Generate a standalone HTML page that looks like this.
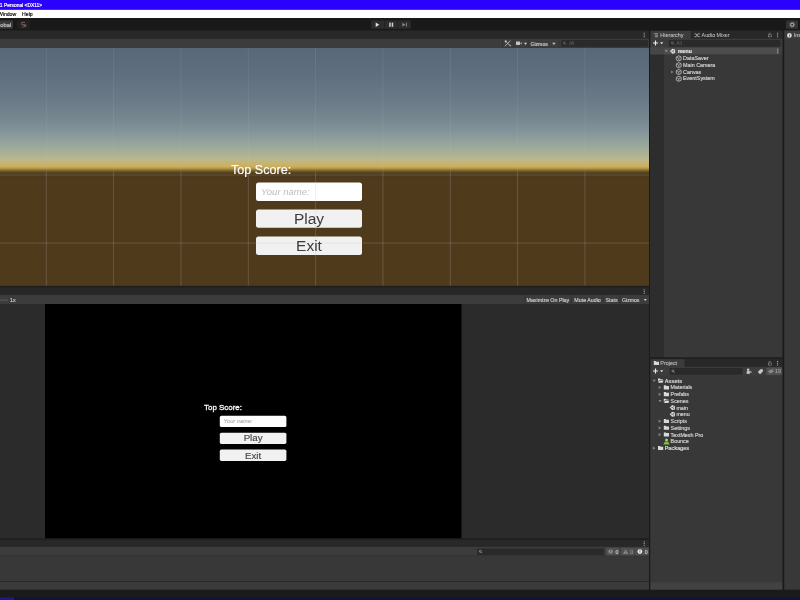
<!DOCTYPE html>
<html>
<head>
<meta charset="utf-8">
<title>Unity</title>
<style>
*{margin:0;padding:0;box-sizing:border-box;}
html,body{width:800px;height:600px;overflow:hidden;background:#383838;}
body{position:relative;font-family:"Liberation Sans",sans-serif;font-size:5.3px;color:#d2d2d2;line-height:1;}
#root{position:absolute;left:0;top:0;width:800px;height:600px;will-change:transform;overflow:hidden;}
#bg{position:absolute;left:0;top:0;}
.t{position:absolute;white-space:nowrap;line-height:1;}
.s{-webkit-text-stroke:0.18px currentColor;}
</style>
</head>
<body>
<div id="root">
<svg id="bg" width="800" height="600" viewBox="0 0 800 600">
<!-- base -->
<rect x="0" y="0" width="800" height="600" fill="#383838"/>
<rect x="0" y="18" width="800" height="13.5" fill="#191919"/>
<!-- scene panel -->
<rect x="0" y="30.4" width="649.0" height="10" fill="#282828"/>
<rect x="0" y="38.8" width="649.0" height="10" fill="#3c3c3c"/>
<rect x="0" y="47.2" width="649.0" height="2" fill="#232323"/>
<defs><linearGradient id="sky" gradientUnits="userSpaceOnUse" x1="0" y1="47.7" x2="0" y2="287.3"><stop offset="0.00000" stop-color="#58687a"/><stop offset="0.10434" stop-color="#5e6e7e"/><stop offset="0.21703" stop-color="#6a7a87"/><stop offset="0.29215" stop-color="#75868f"/><stop offset="0.35476" stop-color="#84969a"/><stop offset="0.40902" stop-color="#99a89b"/><stop offset="0.44240" stop-color="#abb194"/><stop offset="0.46745" stop-color="#bcb78a"/><stop offset="0.48414" stop-color="#c8b46c"/><stop offset="0.49666" stop-color="#cbad5c"/><stop offset="0.50501" stop-color="#b09344"/><stop offset="0.51336" stop-color="#7a612b"/><stop offset="0.52170" stop-color="#574220"/><stop offset="0.53005" stop-color="#4a371b"/><stop offset="0.54674" stop-color="#4f3a1c"/><stop offset="1.00000" stop-color="#4f3a1c"/></linearGradient></defs>
<rect x="0" y="47.7" width="649.0" height="239.6" fill="url(#sky)"/>
<rect x="256" y="182.5" width="106" height="18.5" rx="2.5" fill="#fff"/>
<rect x="256" y="209.5" width="106" height="18.3" rx="2.5" fill="#f1f1f1"/>
<rect x="256" y="236.5" width="106" height="18.5" rx="2.5" fill="#f1f1f1"/>
<rect x="45.85" y="47.7" width="0.9" height="124.3" fill="rgba(200,200,200,0.13)"/>
<rect x="45.85" y="172" width="0.9" height="115.3" fill="rgba(190,190,190,0.25)"/>
<rect x="113.18" y="47.7" width="0.9" height="124.3" fill="rgba(200,200,200,0.13)"/>
<rect x="113.18" y="172" width="0.9" height="115.3" fill="rgba(190,190,190,0.25)"/>
<rect x="180.51" y="47.7" width="0.9" height="124.3" fill="rgba(200,200,200,0.13)"/>
<rect x="180.51" y="172" width="0.9" height="115.3" fill="rgba(190,190,190,0.25)"/>
<rect x="247.84" y="47.7" width="0.9" height="124.3" fill="rgba(200,200,200,0.13)"/>
<rect x="247.84" y="172" width="0.9" height="115.3" fill="rgba(190,190,190,0.25)"/>
<rect x="315.17" y="47.7" width="0.9" height="124.3" fill="rgba(200,200,200,0.13)"/>
<rect x="315.17" y="172" width="0.9" height="115.3" fill="rgba(190,190,190,0.25)"/>
<rect x="382.5" y="47.7" width="0.9" height="124.3" fill="rgba(200,200,200,0.13)"/>
<rect x="382.5" y="172" width="0.9" height="115.3" fill="rgba(190,190,190,0.25)"/>
<rect x="449.83" y="47.7" width="0.9" height="124.3" fill="rgba(200,200,200,0.13)"/>
<rect x="449.83" y="172" width="0.9" height="115.3" fill="rgba(190,190,190,0.25)"/>
<rect x="517.16" y="47.7" width="0.9" height="124.3" fill="rgba(200,200,200,0.13)"/>
<rect x="517.16" y="172" width="0.9" height="115.3" fill="rgba(190,190,190,0.25)"/>
<rect x="584.49" y="47.7" width="0.9" height="124.3" fill="rgba(200,200,200,0.13)"/>
<rect x="584.49" y="172" width="0.9" height="115.3" fill="rgba(190,190,190,0.25)"/>
<rect x="0" y="174.55" width="649.0" height="0.9" fill="rgba(190,190,190,0.25)"/>
<rect x="0" y="242.55" width="649.0" height="0.9" fill="rgba(190,190,190,0.25)"/>
<!-- game panel -->
<rect x="0" y="285.8" width="649.0" height="3" fill="#1e1e1e"/>
<rect x="0" y="287.5" width="649.0" height="9" fill="#282828"/>
<rect x="0" y="295" width="649.0" height="10" fill="#3c3c3c"/>
<rect x="0" y="304" width="649.0" height="236" fill="#2b2b2b"/>
<rect x="45" y="304" width="416.5" height="235" fill="#000"/>
<rect x="0" y="538.2" width="649.0" height="3" fill="#1e1e1e"/>
<!-- console -->
<rect x="0" y="539.8" width="649.0" height="8" fill="#282828"/>
<rect x="0" y="546.8" width="649.0" height="10" fill="#3c3c3c"/>
<rect x="0" y="555.7" width="649.0" height="27" fill="#383838"/>
<rect x="0" y="555.6" width="649.0" height="0.6" fill="#303030"/>
<rect x="0" y="581.1" width="649.0" height="0.9" fill="#2a2a2a"/>
<rect x="0" y="582" width="649.0" height="8" fill="#3a3a3a"/>
<!-- hierarchy -->
<rect x="649.0" y="30.4" width="1.5" height="560" fill="#1a1a1a"/>
<rect x="650.5" y="30.4" width="132.0" height="10" fill="#282828"/>
<rect x="650.5" y="38.8" width="132.0" height="10" fill="#3c3c3c"/>
<rect x="650.5" y="47.4" width="132.0" height="311" fill="#383838"/>
<rect x="650.5" y="54.3" width="13.5" height="304" fill="#2d2d2d"/>
<rect x="650.5" y="47.5" width="132.0" height="6.8" fill="#4d4d4d"/>
<rect x="650.5" y="47.5" width="13.5" height="6.8" fill="#464646"/>
<rect x="778.6" y="47.5" width="3.9" height="6.8" fill="#3f3f3f"/>
<rect x="650.8" y="31" width="40" height="8.2" fill="#3c3c3c"/>
<!-- project -->
<rect x="650.5" y="357.4" width="132.0" height="2" fill="#1a1a1a"/>
<rect x="650.5" y="358.6" width="132.0" height="9" fill="#282828"/>
<rect x="650.8" y="359.2" width="33.6" height="8" fill="#3c3c3c"/>
<rect x="650.5" y="366.8" width="132.0" height="10" fill="#3c3c3c"/>
<rect x="650.5" y="375.6" width="132.0" height="207" fill="#383838"/>
<rect x="650.5" y="582.3" width="132.0" height="8" fill="#424242"/>
<!-- inspector -->
<rect x="782.5" y="30.4" width="2" height="560" fill="#1a1a1a"/>
<rect x="784.5" y="30.4" width="16" height="9" fill="#3c3c3c"/>
<rect x="784.5" y="38.8" width="16" height="552" fill="#383838"/>
<!-- bottom -->
<rect x="0" y="589.7" width="800" height="11" fill="#1a1a1a"/>
<rect x="0" y="597.4" width="800" height="3" fill="#15123a"/>
<rect x="0" y="597.4" width="14" height="3" fill="#24168a"/>
<!-- title/menu -->
<rect x="0" y="9.6" width="800" height="8.4" fill="#ffffff"/>
<rect x="0" y="0" width="800" height="9.6" fill="#2a00ff"/>
<!-- main toolbar -->
<rect x="-3" y="20.6" width="16" height="8.2" rx="1" fill="#3a3a3a"/>
<rect x="17.4" y="20.6" width="12.4" height="8.2" rx="1" fill="#242020"/>
<g transform="translate(17.4,20.6)"><path d="M7.6 1.7 H4.3 V4 H6.4" fill="none" stroke="#7a6460" stroke-width="0.9"/><path d="M4.2 6.4 H7" fill="none" stroke="#6a5552" stroke-width="0.8"/><circle cx="7.5" cy="5" r="1.5" fill="#6e5654"/></g>
<rect x="371.2" y="20.5" width="39.6" height="8.3" rx="1" fill="#2c2c2c"/>
<rect x="384.2" y="20.5" width="0.6" height="8.3" fill="#1d1d1d"/>
<rect x="397.5" y="20.5" width="0.6" height="8.3" fill="#1d1d1d"/>
<g transform="translate(371.2,20.5)"><path d="M4.5 1.9 L8.1 4.15 L4.5 6.4 Z" fill="#e0e0e0"/>
<rect x="18" y="2.1" width="1.5" height="4.2" fill="#cfcfcf"/><rect x="20.5" y="2.1" width="1.5" height="4.2" fill="#cfcfcf"/>
<path d="M31.2 2.2 L34.4 4.15 L31.2 6.1 Z" fill="#8a8a8a"/><rect x="34.8" y="2.2" width="0.9" height="3.9" fill="#8a8a8a"/></g>
<rect x="786" y="20.6" width="12" height="8.2" rx="1" fill="#333333"/>
<g transform="translate(786,20.6)"><circle cx="6.2" cy="4.1" r="1.6" fill="none" stroke="#9c9c9c" stroke-width="1.2"/><circle cx="6.2" cy="4.1" r="2.4" fill="none" stroke="#9c9c9c" stroke-width="0.7" stroke-dasharray="0.95 0.95"/></g>
<!-- scene toolbar -->
<g transform="translate(643.2,32.6)"><rect x="0.5" y="0.2" width="1" height="1" fill="#b8b8b8"/><rect x="0.5" y="1.95" width="1" height="1" fill="#b8b8b8"/><rect x="0.5" y="3.7" width="1" height="1" fill="#b8b8b8"/></g>
<rect x="502.2" y="38.8" width="0.6" height="8.4" fill="#2e2e2e"/>
<rect x="513.2" y="38.8" width="0.6" height="8.4" fill="#2e2e2e"/>
<rect x="527.9" y="38.8" width="0.6" height="8.4" fill="#2e2e2e"/>
<rect x="558.7" y="38.8" width="0.6" height="8.4" fill="#2e2e2e"/>
<g transform="translate(504.5,40.2)"><path d="M0.9 0.9 L6 5.8 M5.9 0.4 L0.5 6" stroke="#c0c0c0" stroke-width="0.85" fill="none"/><circle cx="1.2" cy="1.2" r="1.05" fill="#c0c0c0"/><circle cx="5.6" cy="5.4" r="0.7" fill="#c0c0c0"/></g>
<g transform="translate(516,41.5)"><rect x="0" y="0" width="4" height="3.5" rx="0.4" fill="#c4c4c4"/><path d="M4.2 1.75 L5.6 0.5 V3 Z" fill="#c4c4c4"/></g>
<g transform="translate(523.8,42.8)"><path d="M0 0 H3.4 L1.7 2.1 Z" fill="#c4c4c4"/></g>
<g transform="translate(552.2,42.8)"><path d="M0 0 H3.4 L1.7 2.1 Z" fill="#c4c4c4"/></g>
<rect x="561" y="40" width="87" height="6.7" rx="1.2" fill="#2a2a2a"/>
<g transform="translate(563,41.6)"><circle cx="1.3" cy="1.3" r="1" fill="none" stroke="#7a7a7a" stroke-width="0.6"/><path d="M2 2 L3.2 3.2" stroke="#7a7a7a" stroke-width="0.6"/></g>
<!-- game toolbar -->
<g transform="translate(643.2,289.2)"><rect x="0.5" y="0.2" width="1" height="1" fill="#b8b8b8"/><rect x="0.5" y="1.95" width="1" height="1" fill="#b8b8b8"/><rect x="0.5" y="3.7" width="1" height="1" fill="#b8b8b8"/></g>
<rect x="524.7" y="295.2" width="0.6" height="8.6" fill="#303030"/>
<rect x="571.3" y="295.2" width="0.6" height="8.6" fill="#303030"/>
<rect x="602.7" y="295.2" width="0.6" height="8.6" fill="#303030"/>
<rect x="619.7" y="295.2" width="0.6" height="8.6" fill="#303030"/>
<rect x="0" y="299.7" width="8" height="0.8" fill="#646464"/>
<g transform="translate(643.6,299)"><path d="M0 0 H3.4 L1.7 2.1 Z" fill="#c4c4c4"/></g>
<rect x="219.8" y="415.8" width="66.6" height="11.3" rx="1.6" fill="#fff"/>
<rect x="219.8" y="432.7" width="66.6" height="11.2" rx="1.6" fill="#f1f1f1"/>
<rect x="219.8" y="449.6" width="66.6" height="11.3" rx="1.6" fill="#f1f1f1"/>
<!-- console toolbar -->
<g transform="translate(643.2,541.1)"><rect x="0.5" y="0.2" width="1" height="1" fill="#b8b8b8"/><rect x="0.5" y="1.95" width="1" height="1" fill="#b8b8b8"/><rect x="0.5" y="3.7" width="1" height="1" fill="#b8b8b8"/></g>
<rect x="477" y="548.4" width="127" height="6.7" rx="1.2" fill="#2a2a2a"/>
<g transform="translate(479,550)"><circle cx="1.3" cy="1.3" r="1" fill="none" stroke="#b0b0b0" stroke-width="0.6"/><path d="M2 2 L3.2 3.2" stroke="#b0b0b0" stroke-width="0.6"/></g>
<rect x="606" y="547.7" width="13.6" height="7.9" rx="0.8" fill="#505050"/>
<rect x="620.9" y="547.7" width="13.6" height="7.9" rx="0.8" fill="#505050"/>
<rect x="635.2" y="547.7" width="13.6" height="7.9" rx="0.8" fill="#505050"/>
<g transform="translate(606,547.7)"><circle cx="4.6" cy="3.9" r="2.2" fill="#8c8c8c"/><rect x="4.25" y="2.6" width="0.7" height="1.7" fill="#505050"/><rect x="4.25" y="4.7" width="0.7" height="0.7" fill="#505050"/></g>
<g transform="translate(620.9,547.7)"><path d="M4.7 1.5 L7.2 6.1 H2.2 Z" fill="#8c8c8c"/><rect x="4.4" y="3" width="0.6" height="1.6" fill="#505050"/><rect x="4.4" y="5" width="0.6" height="0.6" fill="#505050"/></g>
<g transform="translate(635.2,547.7)"><circle cx="4.7" cy="3.9" r="2.35" fill="#ececec"/><rect x="4.3" y="2.5" width="0.8" height="1.8" fill="#505050"/><rect x="4.3" y="4.7" width="0.8" height="0.7" fill="#505050"/></g>
<!-- hierarchy contents -->
<g transform="translate(654,33.3)"><rect x="0" y="0" width="4" height="0.9" fill="#9c9c9c"/><rect x="1" y="1.5" width="3" height="0.9" fill="#9c9c9c"/><rect x="1" y="3" width="3" height="0.9" fill="#9c9c9c"/></g>
<g transform="translate(694.5,33.2)"><path d="M0 0.7 H1.6 L3.4 3.5 H5.4 M0 3.5 H1.6 L3.4 0.7 H5.4" stroke="#c0c0c0" stroke-width="0.75" fill="none"/></g>
<g transform="translate(768,32.6)"><rect x="0.5" y="2.2" width="2.8" height="2.1" fill="none" stroke="#8e8e8e" stroke-width="0.6"/><path d="M1.1 2.2 V1.3 A0.8 0.8 0 0 1 2.7 1.2" fill="none" stroke="#8e8e8e" stroke-width="0.6"/></g>
<g transform="translate(776.6,32.6)"><rect x="0.5" y="0.2" width="1" height="1" fill="#b8b8b8"/><rect x="0.5" y="1.95" width="1" height="1" fill="#b8b8b8"/><rect x="0.5" y="3.7" width="1" height="1" fill="#b8b8b8"/></g>
<g transform="translate(653,40.5)"><path d="M2.5 0 V5 M0 2.5 H5" stroke="#ececec" stroke-width="1.15"/></g>
<g transform="translate(659.9,42.2)"><path d="M0 0 H3.4 L1.7 2.1 Z" fill="#d8d8d8"/></g>
<rect x="668.8" y="40" width="111.8" height="6.7" rx="1.2" fill="#2a2a2a"/>
<g transform="translate(671,41.6)"><circle cx="1.3" cy="1.3" r="1" fill="none" stroke="#7a7a7a" stroke-width="0.6"/><path d="M2 2 L3.2 3.2" stroke="#7a7a7a" stroke-width="0.6"/></g>
<g transform="translate(664.8,49.6)"><path d="M0 0.3 H3.2 L1.6 2.7 Z" fill="#8a8a8a"/></g>
<g transform="translate(669.8,48.7)"><path d="M0 2.5 L1.7 1.1 L2.3 0 L5.2 0.8 L5.4 4.4 L2.3 5 L1.7 3.9 Z" fill="#e0e0e0"/><path d="M1.6 2.5 H3.3 M3.3 2.5 L4.3 1 M3.3 2.5 L4.3 4" stroke="#4d4d4d" stroke-width="0.6" fill="none"/></g>
<g transform="translate(776.8,48.6)"><rect x="0.5" y="0.2" width="1" height="1" fill="#c8c8c8"/><rect x="0.5" y="1.95" width="1" height="1" fill="#c8c8c8"/><rect x="0.5" y="3.7" width="1" height="1" fill="#c8c8c8"/></g>
<g transform="translate(676,55.6)"><path d="M2.75 0.25 L5.05 1.3 L5.25 2.8 L5.05 4.3 L2.75 5.35 L0.45 4.3 L0.25 2.8 L0.45 1.3 Z" fill="none" stroke="#cfcfcf" stroke-width="0.75" stroke-linejoin="round"/><path d="M0.9 1.7 L2.75 2.75 L4.6 1.7 M2.75 2.75 V4.9" fill="none" stroke="#cfcfcf" stroke-width="0.6"/></g>
<g transform="translate(676,62.4)"><path d="M2.75 0.25 L5.05 1.3 L5.25 2.8 L5.05 4.3 L2.75 5.35 L0.45 4.3 L0.25 2.8 L0.45 1.3 Z" fill="none" stroke="#cfcfcf" stroke-width="0.75" stroke-linejoin="round"/><path d="M0.9 1.7 L2.75 2.75 L4.6 1.7 M2.75 2.75 V4.9" fill="none" stroke="#cfcfcf" stroke-width="0.6"/></g>
<g transform="translate(670.8,70.4)"><path d="M0.3 0 L2.7 1.6 L0.3 3.2 Z" fill="#8a8a8a"/></g>
<g transform="translate(676,69.2)"><path d="M2.75 0.25 L5.05 1.3 L5.25 2.8 L5.05 4.3 L2.75 5.35 L0.45 4.3 L0.25 2.8 L0.45 1.3 Z" fill="none" stroke="#cfcfcf" stroke-width="0.75" stroke-linejoin="round"/><path d="M0.9 1.7 L2.75 2.75 L4.6 1.7 M2.75 2.75 V4.9" fill="none" stroke="#cfcfcf" stroke-width="0.6"/></g>
<g transform="translate(676,76.0)"><path d="M2.75 0.25 L5.05 1.3 L5.25 2.8 L5.05 4.3 L2.75 5.35 L0.45 4.3 L0.25 2.8 L0.45 1.3 Z" fill="none" stroke="#cfcfcf" stroke-width="0.75" stroke-linejoin="round"/><path d="M0.9 1.7 L2.75 2.75 L4.6 1.7 M2.75 2.75 V4.9" fill="none" stroke="#cfcfcf" stroke-width="0.6"/></g>
<!-- project contents -->
<g transform="translate(653.8,361)"><path d="M0 0 H2 L2.6 0.7 H5.2 V4.1 H0 Z" fill="#d8d8d8"/></g>
<g transform="translate(768,360.8)"><rect x="0.5" y="2.2" width="2.8" height="2.1" fill="none" stroke="#8e8e8e" stroke-width="0.6"/><path d="M1.1 2.2 V1.3 A0.8 0.8 0 0 1 2.7 1.2" fill="none" stroke="#8e8e8e" stroke-width="0.6"/></g>
<g transform="translate(776.6,360.8)"><rect x="0.5" y="0.2" width="1" height="1" fill="#b8b8b8"/><rect x="0.5" y="1.95" width="1" height="1" fill="#b8b8b8"/><rect x="0.5" y="3.7" width="1" height="1" fill="#b8b8b8"/></g>
<g transform="translate(653,368.5)"><path d="M2.5 0 V5 M0 2.5 H5" stroke="#ececec" stroke-width="1.15"/></g>
<g transform="translate(659.9,370.2)"><path d="M0 0 H3.4 L1.7 2.1 Z" fill="#d8d8d8"/></g>
<rect x="669.5" y="368" width="73" height="6.7" rx="1.2" fill="#2a2a2a"/>
<g transform="translate(671.6,369.6)"><circle cx="1.3" cy="1.3" r="1" fill="none" stroke="#b0b0b0" stroke-width="0.6"/><path d="M2 2 L3.2 3.2" stroke="#b0b0b0" stroke-width="0.6"/></g>
<g transform="translate(746,367.9)"><circle cx="2.2" cy="1.8" r="1.25" fill="#c8c8c8"/><rect x="0.7" y="3.2" width="3.1" height="2.7" fill="#c8c8c8"/><path d="M4.2 3 L6.1 4.1 L4.2 5.2 Z" fill="#c8c8c8"/></g>
<g transform="translate(757,367.9)"><path d="M0.8 4.2 L3.4 1.4 H5.9 V3.7 L3.1 6.3 Z" fill="#c8c8c8"/></g>
<rect x="766.4" y="367.4" width="15.6" height="7.7" rx="0.8" fill="#505050"/>
<g transform="translate(768,368.5)"><path d="M0.3 2.8 Q3 0.2 5.7 2.8 Q3 5.4 0.3 2.8 Z" fill="none" stroke="#a4a4a4" stroke-width="0.6"/><circle cx="3" cy="2.8" r="0.9" fill="#a4a4a4"/><path d="M0.8 5 L5.4 0.6" stroke="#a4a4a4" stroke-width="0.6"/></g>
<g transform="translate(652.6,379.4)"><path d="M0 0.3 H3.2 L1.6 2.7 Z" fill="#8a8a8a"/></g>
<g transform="translate(658.0,378.6)"><path d="M0 0 H1.9 L2.5 0.7 H4.6 V1.5 H1.1 L0 3.8 Z" fill="#d8d8d8"/><path d="M1.4 1.9 H5.6 L4.6 4.1 H0.2 Z" fill="#d8d8d8"/></g>
<g transform="translate(658.4,385.9)"><path d="M0.3 0 L2.7 1.6 L0.3 3.2 Z" fill="#8a8a8a"/></g>
<g transform="translate(663.8,385.3)"><path d="M0 0 H2 L2.6 0.7 H5.2 V4.1 H0 Z" fill="#d8d8d8"/></g>
<g transform="translate(658.4,392.7)"><path d="M0.3 0 L2.7 1.6 L0.3 3.2 Z" fill="#8a8a8a"/></g>
<g transform="translate(663.8,392.1)"><path d="M0 0 H2 L2.6 0.7 H5.2 V4.1 H0 Z" fill="#d8d8d8"/></g>
<g transform="translate(658.4,399.6)"><path d="M0 0.3 H3.2 L1.6 2.7 Z" fill="#8a8a8a"/></g>
<g transform="translate(663.8,398.8)"><path d="M0 0 H1.9 L2.5 0.7 H4.6 V1.5 H1.1 L0 3.8 Z" fill="#d8d8d8"/><path d="M1.4 1.9 H5.6 L4.6 4.1 H0.2 Z" fill="#d8d8d8"/></g>
<g transform="translate(669.6,405.1)"><path d="M0 2.5 L1.7 1.1 L2.3 0 L5.2 0.8 L5.4 4.4 L2.3 5 L1.7 3.9 Z" fill="#e0e0e0"/><path d="M1.6 2.5 H3.3 M3.3 2.5 L4.3 1 M3.3 2.5 L4.3 4" stroke="#383838" stroke-width="0.6" fill="none"/></g>
<g transform="translate(669.6,411.8)"><path d="M0 2.5 L1.7 1.1 L2.3 0 L5.2 0.8 L5.4 4.4 L2.3 5 L1.7 3.9 Z" fill="#e0e0e0"/><path d="M1.6 2.5 H3.3 M3.3 2.5 L4.3 1 M3.3 2.5 L4.3 4" stroke="#383838" stroke-width="0.6" fill="none"/></g>
<g transform="translate(658.4,419.6)"><path d="M0.3 0 L2.7 1.6 L0.3 3.2 Z" fill="#8a8a8a"/></g>
<g transform="translate(663.8,419.0)"><path d="M0 0 H2 L2.6 0.7 H5.2 V4.1 H0 Z" fill="#d8d8d8"/></g>
<g transform="translate(658.4,426.3)"><path d="M0.3 0 L2.7 1.6 L0.3 3.2 Z" fill="#8a8a8a"/></g>
<g transform="translate(663.8,425.7)"><path d="M0 0 H2 L2.6 0.7 H5.2 V4.1 H0 Z" fill="#d8d8d8"/></g>
<g transform="translate(658.4,433.0)"><path d="M0.3 0 L2.7 1.6 L0.3 3.2 Z" fill="#8a8a8a"/></g>
<g transform="translate(663.8,432.4)"><path d="M0 0 H2 L2.6 0.7 H5.2 V4.1 H0 Z" fill="#d8d8d8"/></g>
<g transform="translate(663.2,438.5)"><circle cx="3.3" cy="1.6" r="1.5" fill="#9ad85a"/><path d="M0.2 5.9 L1.6 3.3 H5 L6.4 5.9 Z" fill="#7cc043"/></g>
<g transform="translate(652.6,446.6)"><path d="M0.3 0 L2.7 1.6 L0.3 3.2 Z" fill="#8a8a8a"/></g>
<g transform="translate(658.0,446.0)"><path d="M0 0 H2 L2.6 0.7 H5.2 V4.1 H0 Z" fill="#d8d8d8"/></g>
<!-- inspector contents -->
<g transform="translate(787.1,33)"><circle cx="2.3" cy="2.4" r="2.3" fill="#e4e4e4"/><rect x="1.95" y="2" width="0.75" height="1.8" fill="#3c3c3c"/><rect x="1.95" y="0.9" width="0.75" height="0.75" fill="#3c3c3c"/></g>
</svg>
<div class="t" style="left:231px;top:164px;font-size:12.6px;color:#fff;-webkit-text-stroke:0.2px #fff;">Top Score:</div>
<div class="t" style="left:261px;top:187px;font-size:9.5px;color:#bdbdbd;font-style:italic;">Your name:</div>
<div class="t" style="left:256px;top:211px;font-size:15.5px;color:#3c3c3c;width:106px;text-align:center;">Play</div>
<div class="t" style="left:256px;top:238px;font-size:15.5px;color:#3c3c3c;width:106px;text-align:center;">Exit</div>
<div class="t s" style="left:-0.2px;top:4px;font-size:4.9px;color:#fff;">1 Personal &lt;DX11&gt;</div>
<div class="t s" style="left:-2.1px;top:12px;font-size:5.15px;color:#111;">Window</div>
<div class="t s" style="left:22.1px;top:12px;font-size:5.15px;color:#111;">Help</div>
<div class="t s" style="left:0.2px;top:23px;font-size:5.8px;color:#c4c4c4;">obal</div>
<div class="t s" style="left:530.4px;top:42px;font-size:5.15px;color:#c8c8c8;">Gizmos</div>
<div class="t s" style="left:569px;top:42px;font-size:4.9px;color:#626262;-webkit-text-stroke:0;">All</div>
<div class="t s" style="left:10px;top:298px;font-size:5.3px;color:#c8c8c8;">1x</div>
<div class="t s" style="left:526.5px;top:298px;font-size:5.3px;color:#c8c8c8;">Maximize On Play</div>
<div class="t s" style="left:574.3px;top:298px;font-size:5.3px;color:#c8c8c8;">Mute Audio</div>
<div class="t s" style="left:605.5px;top:298px;font-size:5.3px;color:#c8c8c8;">Stats</div>
<div class="t s" style="left:622px;top:298px;font-size:5.15px;color:#c8c8c8;">Gizmos</div>
<div class="t" style="left:204px;top:404px;font-size:7.95px;color:#fff;-webkit-text-stroke:0.28px #fff;">Top Score:</div>
<div class="t s" style="left:223.6px;top:419px;font-size:5.65px;color:#b4b4b4;font-style:italic;">Your name:</div>
<div class="t" style="left:219.8px;top:433px;font-size:9.7px;color:#444;width:66.6px;text-align:center;-webkit-text-stroke:0.15px #444;">Play</div>
<div class="t" style="left:219.8px;top:451px;font-size:9.7px;color:#444;width:66.6px;text-align:center;-webkit-text-stroke:0.15px #444;">Exit</div>
<div class="t s" style="left:615.5px;top:550px;font-size:5.2px;color:#c8c8c8;">0</div>
<div class="t s" style="left:630.3px;top:550px;font-size:5.2px;color:#8c8c8c;">0</div>
<div class="t s" style="left:644.7px;top:550px;font-size:5.2px;color:#c8c8c8;">0</div>
<div class="t s" style="left:660.3px;top:33px;font-size:5.4px;color:#c0c0c0;-webkit-text-stroke:0.08px currentColor;">Hierarchy</div>
<div class="t s" style="left:701.6px;top:33px;font-size:5.3px;color:#bcbcbc;-webkit-text-stroke:0.08px currentColor;">Audio Mixer</div>
<div class="t s" style="left:676.3px;top:42px;font-size:4.9px;color:#626262;-webkit-text-stroke:0;">All</div>
<div class="t s" style="left:678px;top:49px;font-size:5.2px;color:#e6e6e6;font-weight:bold;">menu</div>
<div class="t s" style="left:683px;top:56px;font-size:5.4px;color:#d0d0d0;">DataSaver</div>
<div class="t s" style="left:683px;top:63px;font-size:5.4px;color:#d0d0d0;">Main Camera</div>
<div class="t s" style="left:683px;top:70px;font-size:5.4px;color:#d0d0d0;">Canvas</div>
<div class="t s" style="left:683px;top:76px;font-size:5.4px;color:#d0d0d0;">EventSystem</div>
<div class="t s" style="left:660.3px;top:361px;font-size:5.4px;color:#c0c0c0;-webkit-text-stroke:0.08px currentColor;">Project</div>
<div class="t s" style="left:775px;top:369px;font-size:5.2px;color:#a8a8a8;-webkit-text-stroke:0.08px currentColor;">19</div>
<div class="t s" style="left:664.8px;top:379px;font-size:5.3px;color:#d0d0d0;font-weight:bold;">Assets</div>
<div class="t s" style="left:670.6px;top:385px;font-size:5.35px;color:#d0d0d0;">Materials</div>
<div class="t s" style="left:670.6px;top:392px;font-size:5.35px;color:#d0d0d0;">Prefabs</div>
<div class="t s" style="left:670.6px;top:399px;font-size:5.35px;color:#d0d0d0;">Scenes</div>
<div class="t s" style="left:676.4px;top:406px;font-size:5.35px;color:#d0d0d0;">main</div>
<div class="t s" style="left:676.4px;top:412px;font-size:5.35px;color:#d0d0d0;">menu</div>
<div class="t s" style="left:670.6px;top:419px;font-size:5.35px;color:#d0d0d0;">Scripts</div>
<div class="t s" style="left:670.6px;top:426px;font-size:5.35px;color:#d0d0d0;">Settings</div>
<div class="t s" style="left:670.6px;top:433px;font-size:5.35px;color:#d0d0d0;">TextMesh Pro</div>
<div class="t s" style="left:670.6px;top:439px;font-size:5.35px;color:#d0d0d0;">Bounce</div>
<div class="t s" style="left:664.8px;top:446px;font-size:5.3px;color:#d0d0d0;font-weight:bold;">Packages</div>
<div class="t s" style="left:793.8px;top:33px;font-size:5.4px;color:#c0c0c0;-webkit-text-stroke:0.08px currentColor;">Inspector</div>
</div>
</body>
</html>
